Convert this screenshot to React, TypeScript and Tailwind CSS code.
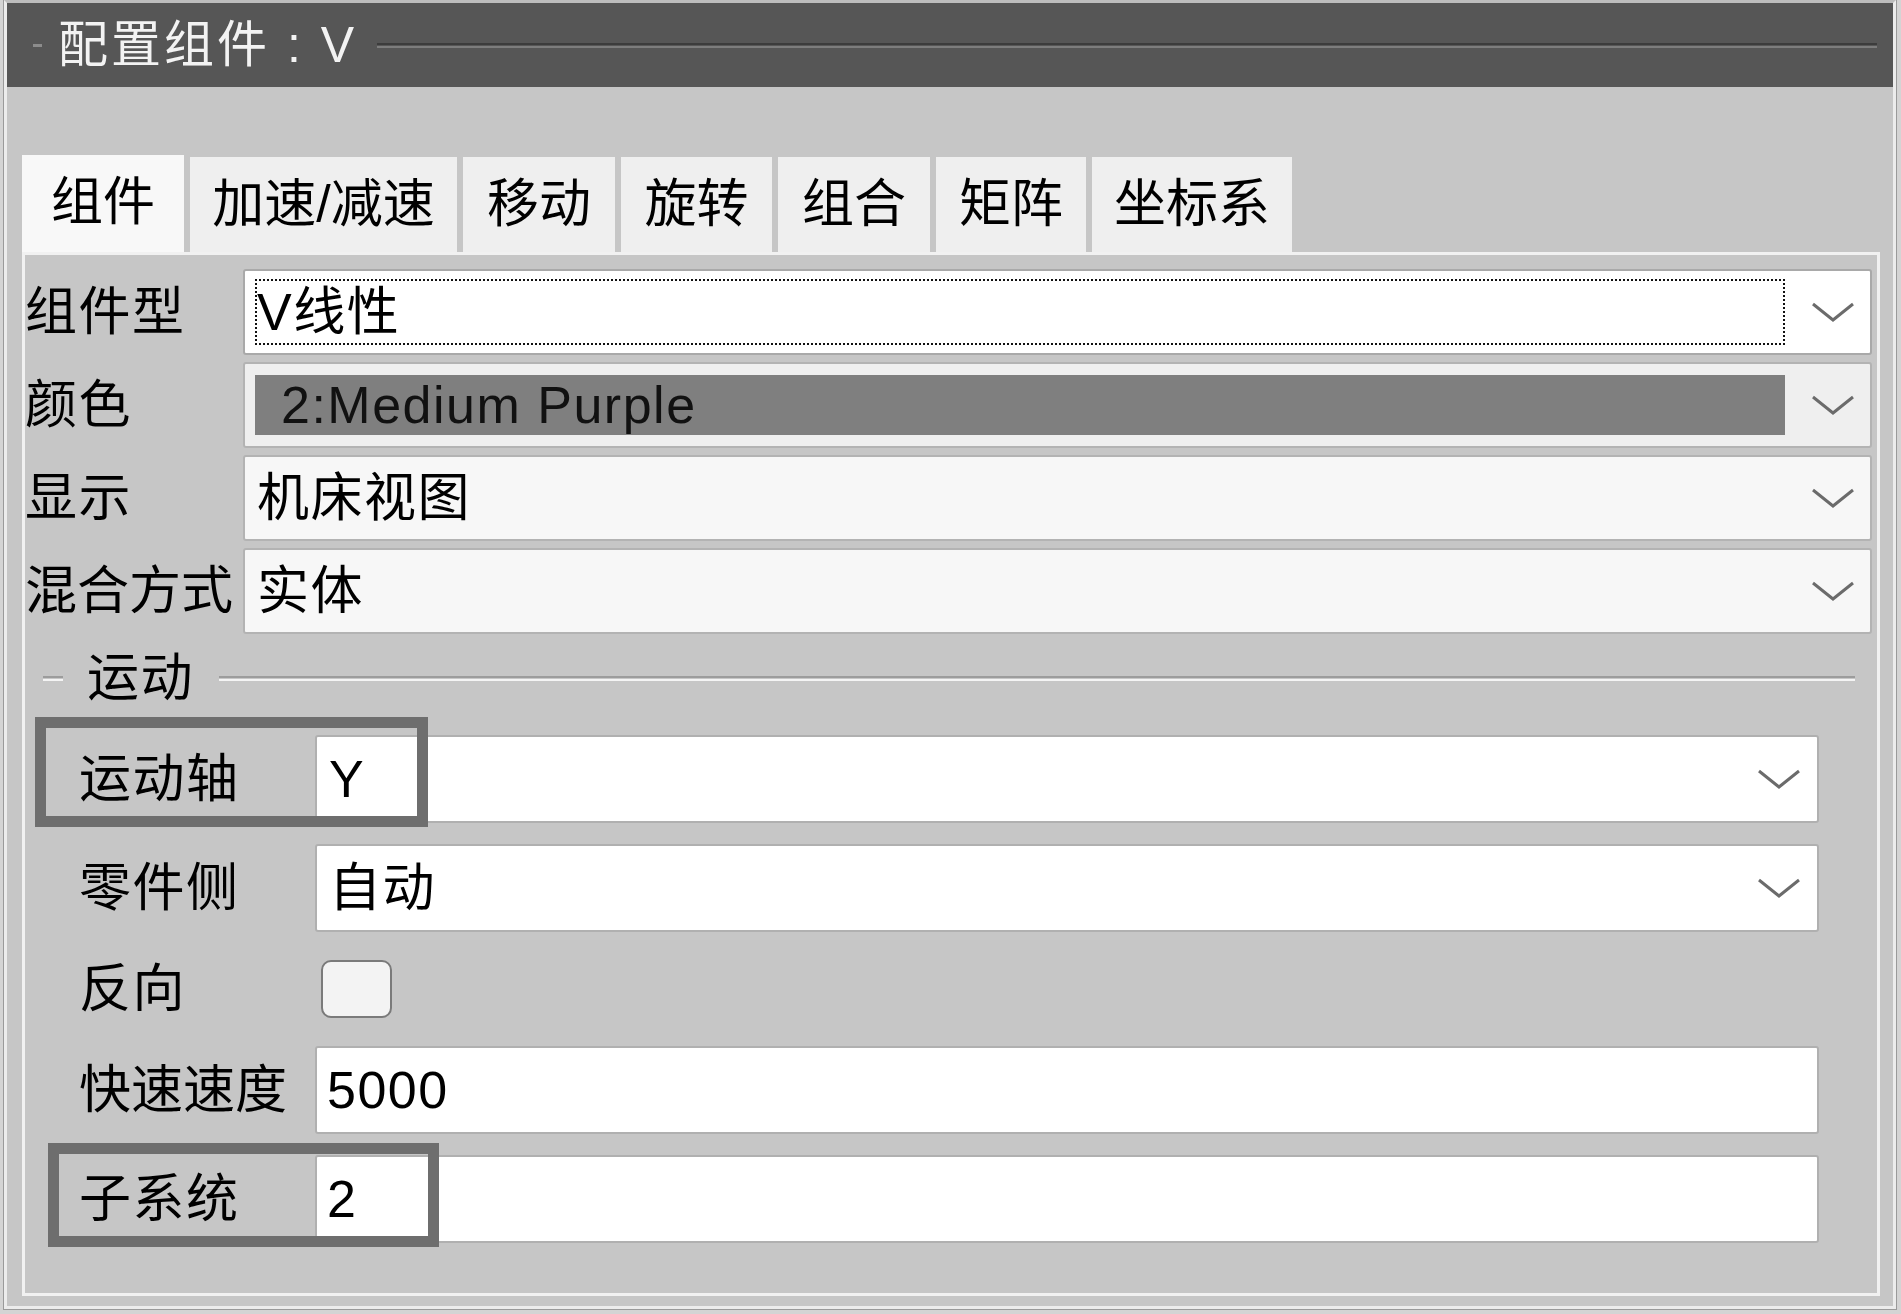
import React from "react";

const FONT = "font-['Liberation_Sans','Noto_Sans_CJK_SC',sans-serif]";

const TABS = [
  { label: "组件", w: "w-[162px]", active: true },
  { label: "加速/减速", w: "w-[267px]" },
  { label: "移动", w: "w-[152px]" },
  { label: "旋转", w: "w-[151px]" },
  { label: "组合", w: "w-[152px]" },
  { label: "矩阵", w: "w-[150px]" },
  { label: "坐标系", w: "w-[200px]" },
];

function Chevron() {
  return (
    <svg width="44" height="22" viewBox="0 0 44 22" fill="none">
      <polyline points="2,3 22,19 42,3" stroke="#6b6b6b" strokeWidth="3" />
    </svg>
  );
}

function Etched({ className = "" }: { className?: string }) {
  return (
    <div
      className={`h-[5px] border-y-2 border-t-[#9c9c9c] border-b-[#f4f4f4] ${className}`}
    />
  );
}

export default function App() {
  return (
    <div
      className={`w-[1901px] h-[1314px] bg-[#d4d4d4] overflow-hidden text-[52px] leading-none text-black tracking-[1.5px] ${FONT}`}
    >
      {/* window */}
      <div className="ml-[4px] w-[1892px] h-[1309px] bg-[#c6c6c6] border-x-[3px] border-b-[3px] border-t-[3px] border-x-[#ececec] border-b-[#ececec] border-t-[#bdbdbd] shadow-[0_0_0_1px_#9a9a9a] flex flex-col">
        {/* title bar */}
        <div className="h-[84px] bg-[#565656] flex items-center shrink-0">
          <div className="ml-[26px] w-[9px] h-[3px] bg-[#8c8c8c]" />
          <span className="ml-[16px] text-[50px] text-[#f3f3f3] tracking-[3px]">
            配置组件 : V
          </span>
          <div className="flex-1 ml-[20px] mr-[16px] h-[5px] border-y-2 border-t-[#3c3c3c] border-b-[#7d7d7d]" />
        </div>

        {/* tabs */}
        <div className="mt-[68px] pl-[15px] flex gap-[6px] h-[97px] shrink-0">
          {TABS.map((t) => (
            <div
              key={t.label}
              className={`${t.w} h-full flex items-center justify-center pb-[4px] tracking-normal ${
                t.active ? "bg-[#f8f8f8]" : "bg-[#efefef] mt-[2px]"
              }`}
            >
              {t.label}
            </div>
          ))}
        </div>

        {/* panel */}
        <div className="ml-[15px] w-[1858px] h-[1044px] border-[3px] border-[#f1f1f1] bg-[#c6c6c6] flex flex-col shrink-0">
          <div className="pt-[14px] flex flex-col gap-[7px]">
            <div className="flex items-center h-[86px]">
              <div className="w-[218px]">组件型</div>
              <div className="relative w-[1629px] h-full bg-white border-2 border-[#a9a9a9] rounded-[3px] flex items-center">
                <div className="absolute left-[10px] top-[8px] bottom-[8px] right-[85px] border-2 border-dotted border-[#111]" />
                <span className="pl-[12px] flex-1">V线性</span>
                <div className="mr-[15px] flex items-center">
                  <Chevron />
                </div>
              </div>
            </div>

            <div className="flex items-center h-[86px]">
              <div className="w-[218px]">颜色</div>
              <div className="w-[1629px] h-full bg-[#efefef] border-2 border-[#b3b3b3] rounded-[3px] flex items-center">
                <div className="ml-[10px] w-[1530px] h-[60px] bg-[#7f7f7f] flex items-center pl-[26px] text-[#111]">
                  2:Medium Purple
                </div>
                <div className="flex-1 flex justify-end mr-[15px]">
                  <Chevron />
                </div>
              </div>
            </div>

            <div className="flex items-center h-[86px]">
              <div className="w-[218px]">显示</div>
              <div className="w-[1629px] h-full bg-[#f7f7f7] border-2 border-[#b3b3b3] rounded-[3px] flex items-center">
                <span className="pl-[12px] flex-1">机床视图</span>
                <div className="mr-[15px] flex items-center">
                  <Chevron />
                </div>
              </div>
            </div>

            <div className="flex items-center h-[86px]">
              <div className="w-[218px] tracking-normal">混合方式</div>
              <div className="w-[1629px] h-full bg-[#f7f7f7] border-2 border-[#b3b3b3] rounded-[3px] flex items-center">
                <span className="pl-[12px] flex-1">实体</span>
                <div className="mr-[15px] flex items-center">
                  <Chevron />
                </div>
              </div>
            </div>
          </div>

          {/* group: 运动 */}
          <div className="mt-[22px] h-[44px] flex items-center">
            <Etched className="ml-[18px] w-[20px]" />
            <span className="ml-[24px]">运动</span>
            <Etched className="flex-1 ml-[25px] mr-[22px]" />
          </div>

          <div className="mt-[35px] flex flex-col gap-[21px]">
            <div className="relative flex items-center h-[88px] pl-[54px]">
              <div className="w-[236px]">运动轴</div>
              <div className="w-[1504px] h-full bg-white border-2 border-[#b0b0b0] rounded-[3px] flex items-center">
                <span className="pl-[12px] flex-1">Y</span>
                <div className="mr-[16px] flex items-center">
                  <Chevron />
                </div>
              </div>
              <div className="absolute left-[10px] top-[-18px] w-[393px] h-[110px] border-[11px] border-[#6e6e6e]" />
            </div>

            <div className="flex items-center h-[88px] pl-[54px]">
              <div className="w-[236px]">零件侧</div>
              <div className="w-[1504px] h-full bg-white border-2 border-[#b0b0b0] rounded-[3px] flex items-center">
                <span className="pl-[12px] flex-1">自动</span>
                <div className="mr-[16px] flex items-center">
                  <Chevron />
                </div>
              </div>
            </div>

            <div className="flex items-center h-[72px] pl-[54px]">
              <div className="w-[236px]">反向</div>
              <div className="ml-[6px] w-[71px] h-[58px] rounded-[10px] border-2 border-[#7a7a7a] bg-[#f3f3f3]" />
            </div>

            <div className="flex items-center h-[88px] pl-[54px]">
              <div className="w-[236px] tracking-normal">快速速度</div>
              <div className="w-[1504px] h-full bg-white border-2 border-[#b0b0b0] rounded-[3px] flex items-center">
                <span className="pl-[10px]">5000</span>
              </div>
            </div>

            <div className="relative flex items-center h-[88px] pl-[54px]">
              <div className="w-[236px]">子系统</div>
              <div className="w-[1504px] h-full bg-white border-2 border-[#b0b0b0] rounded-[3px] flex items-center">
                <span className="pl-[10px]">2</span>
              </div>
              <div className="absolute left-[23px] top-[-12px] w-[391px] h-[104px] border-[11px] border-[#6e6e6e]" />
            </div>
          </div>
        </div>
      </div>
    </div>
  );
}
